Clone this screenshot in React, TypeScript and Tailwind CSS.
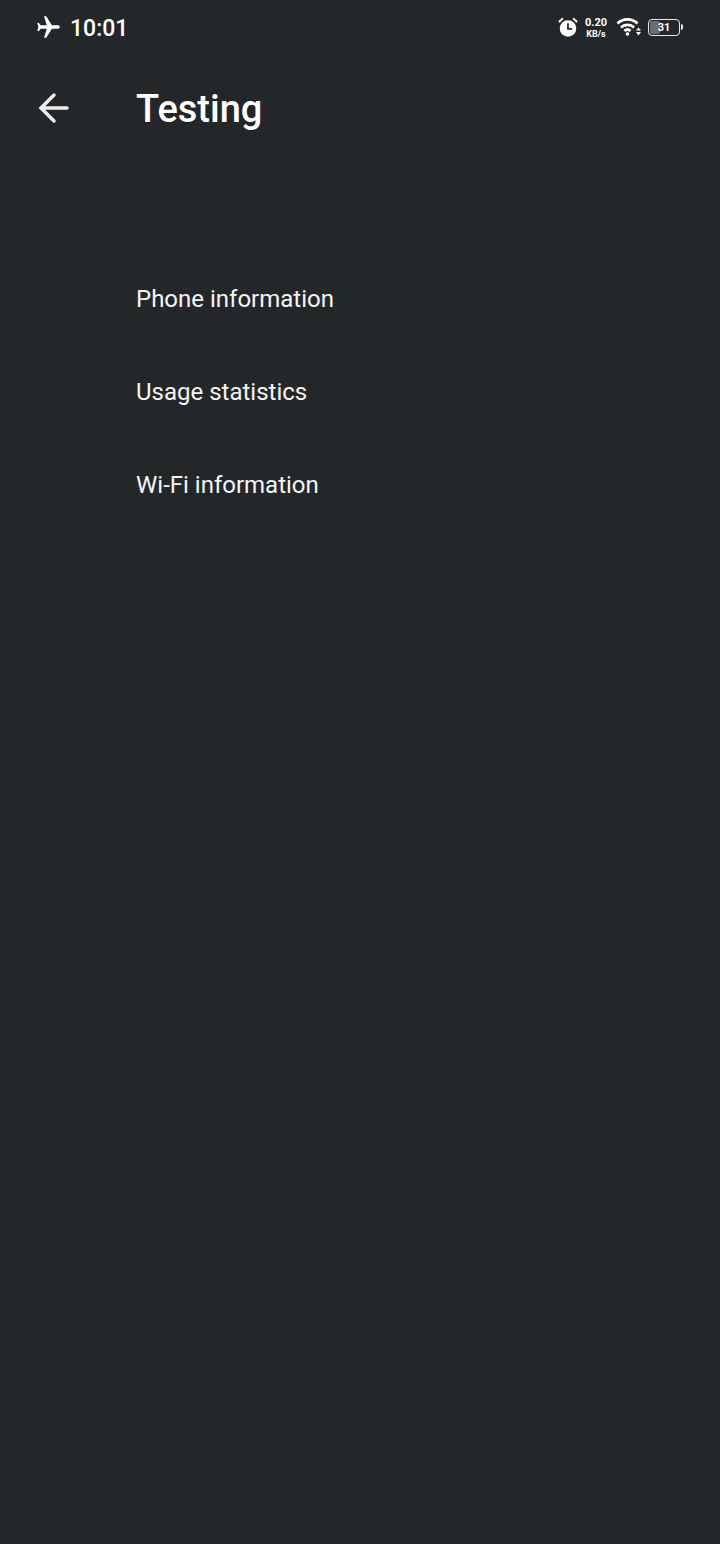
const ROWS = ['Phone information', 'Usage statistics', 'Wi-Fi information']

function Plane() {
  return (
    <svg width="27" height="27" viewBox="0 0 24 24" fill="#fff" className="rotate-90">
      <path d="M21 16v-2l-8-5V3.500C13 2.670 12.330 2 11.500 2S10 2.670 10 3.500V9l-8 5v2l8-2.500V19l-2 1.500V22l3.500-1 3.500 1v-1.500L13 19v-5.500z" />
    </svg>
  )
}

function Alarm() {
  return (
    <svg width="22" height="22" viewBox="0 0 24 24">
      <circle cx="12" cy="13.500" r="9" fill="#fff" />
      <path d="M2 6.500 6.500 2.500M22 6.500 17.500 2.500" stroke="#fff" strokeWidth="2" />
      <path d="M12 8v6h4.500" fill="none" stroke="#24272a" strokeWidth="2" />
    </svg>
  )
}

function Wifi() {
  return (
    <svg width="26" height="22" viewBox="0 0 26 22" fill="none" stroke="#fff" strokeWidth="2.800">
      <path d="M1.500 7.500C7 2 16 2 21.500 7.500" />
      <path d="M5 11.500C8.500 8 14.500 8 18 11.500" />
      <path d="M8.500 15C10.500 13 12.500 13 14.500 15" />
      <circle cx="11.500" cy="18" r="1.800" fill="#fff" stroke="none" />
      <path d="M22.500 11.500 25 14.500h-5zM22.500 19.500 20 16h5z" fill="#fff" stroke="none" />
    </svg>
  )
}

function Battery() {
  return (
    <div className="flex items-center">
      <div className="relative flex h-[17px] w-[32px] items-center justify-center overflow-hidden rounded-[4px] border border-[#e8e8e8]">
        <div className="absolute inset-y-[1px] left-[1px] w-[10px] rounded-[2px] bg-[#6a6c6e]" />
        <span className="relative text-[11px] leading-none font-bold text-white">31</span>
      </div>
      <div className="ml-[1px] h-[6px] w-[2px] rounded-r-sm bg-[#e8e8e8]" />
    </div>
  )
}

export default function App() {
  return (
    <div className="flex h-[1544px] w-[720px] flex-col bg-[#24272a] font-['Roboto',sans-serif] text-white">
      {/* status bar */}
      <div className="flex h-[54px] items-center justify-between pr-[37px] pl-[35px]">
        <div className="flex items-center gap-[8px]">
          <Plane />
          <span className="pt-[2px] text-[23px] leading-none font-medium">10:01</span>
        </div>
        <div className="flex items-center">
          <Alarm />
          <div className="mt-[1px] mr-[9px] ml-[6px] flex flex-col items-center font-bold">
            <span className="text-[11px] leading-[12px]">0.20</span>
            <span className="text-[9px] leading-[10px]">KB/s</span>
          </div>
          <div className="mr-[6px]">
            <Wifi />
          </div>
          <Battery />
        </div>
      </div>

      {/* title bar */}
      <div className="flex h-[108px] items-start">
        <div className="flex w-[136px] pt-[35px] pl-[36px]">
          <svg width="36" height="38" viewBox="0 0 36 38" fill="none" stroke="#eeeeee" strokeWidth="3.500" strokeLinecap="round">
            <path d="M31 19H6M18 6 5 19l13 13" />
          </svg>
        </div>
        <h1 className="pt-[32px] text-[38px] leading-[46px] font-medium">Testing</h1>
      </div>

      {/* rows */}
      <div className="flex flex-col pt-[90px] pl-[136px]">
        {ROWS.map(label => (
          <div key={label} className="flex h-[93px] items-center text-[24px] leading-none text-[#f5f5f5]">
            {label}
          </div>
        ))}
      </div>
    </div>
  )
}
